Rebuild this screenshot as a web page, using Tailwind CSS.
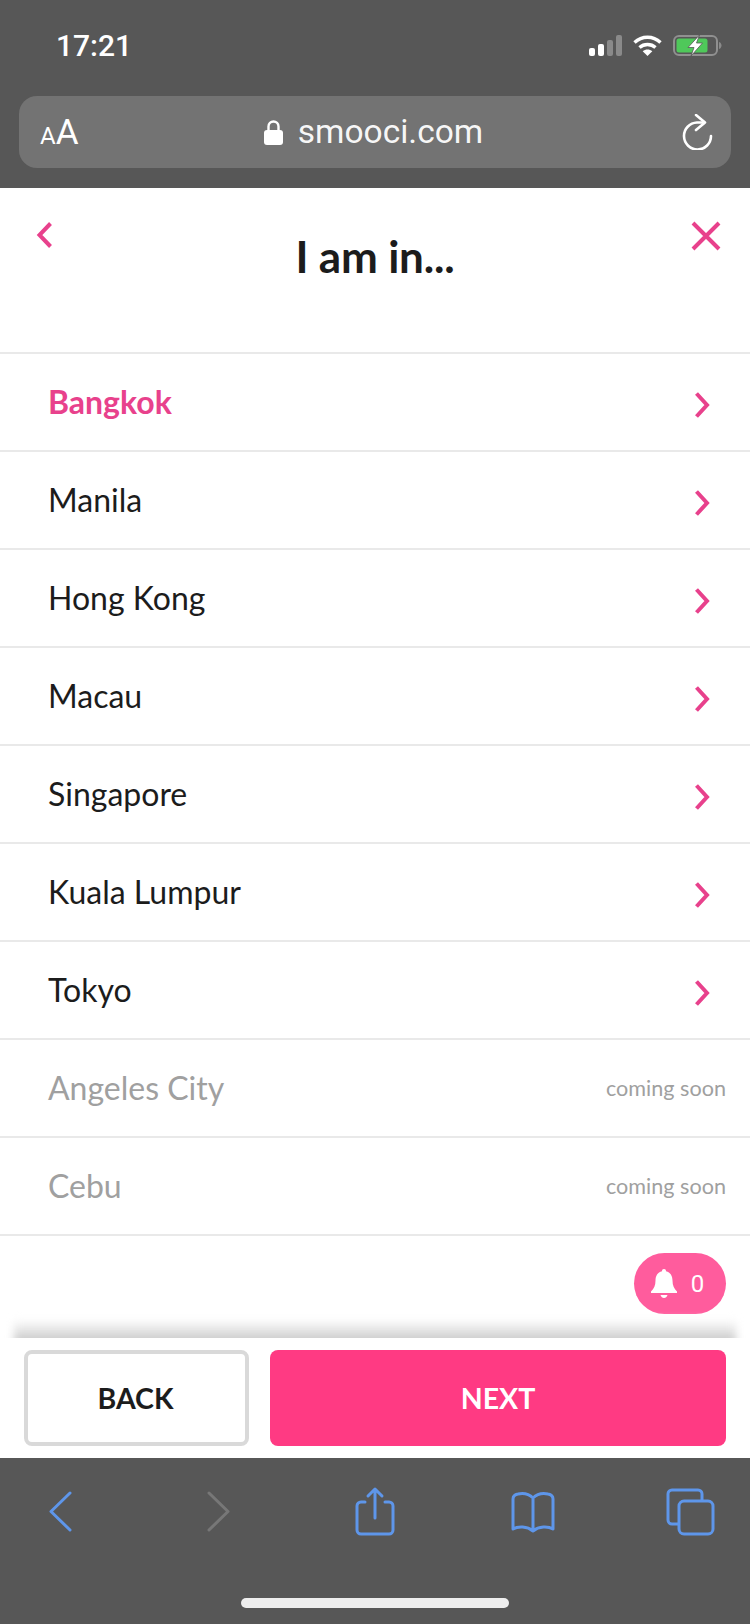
<!DOCTYPE html>
<html lang="en">
<head>
    <meta charset="UTF-8">
    <meta name="viewport" content="width=device-width, initial-scale=1.0">
    <title>smooci</title>
    <script src="https://cdn.jsdelivr.net/npm/@tailwindcss/browser@4"></script>
</head>
<body class="bg-white font-['Lato',sans-serif] text-[#1c1c1c]">
<div class="w-[750px] h-[1624px] flex flex-col overflow-hidden">

    <!-- safari top -->
    <div class="h-[188px] shrink-0 bg-[#575757] text-white px-[19px] pt-[26px]">
        <div class="h-[70px] flex items-start justify-between font-['Roboto',sans-serif]">
            <span class="ml-[37px] mt-[2px] text-[30px] leading-[36px] font-medium">17:21</span>
            <div class="flex items-start gap-[11px] mt-[9px] mr-[9px]">
                <svg width="33" height="21" viewBox="0 0 33 21">
                    <rect x="0" y="13" width="6" height="8" rx="2" fill="#fff"/>
                    <rect x="9" y="9" width="6" height="12" rx="2" fill="#fff"/>
                    <rect x="18" y="5" width="6" height="16" rx="2" fill="#8a8a8a"/>
                    <rect x="27" y="0" width="6" height="21" rx="2" fill="#8a8a8a"/>
                </svg>
                <svg width="29" height="21" viewBox="0 0 29 21" fill="none" stroke="#fff" stroke-width="3.4" stroke-linecap="butt">
                    <path d="M1.500 7.500C9 .5 20 .5 27.500 7.500"/>
                    <path d="M6.500 12.500C11 8.500 18 8.500 22.500 12.500"/>
                    <path d="M14.500 21l-4.800-4.800c2.800-2.400 6.800-2.400 9.600 0z" fill="#fff" stroke="none"/>
                </svg>
                <svg width="49" height="21" viewBox="0 0 49 21">
                    <rect x="1" y="1" width="43" height="19" rx="5" fill="none" stroke="#909090" stroke-width="2"/>
                    <rect x="3.500" y="3.500" width="31" height="14" rx="2.500" fill="#4fc85a"/>
                    <path d="M46 7c1.800.6 2.500 2 2.500 3.500S47.800 13.400 46 14z" fill="#8a8a8a"/>
                    <path d="M26.500 0L15 12.500h6L18 21 29.500 8H23.500z" fill="#fff" stroke="#575757" stroke-width=".8"/>
                </svg>
            </div>
        </div>
        <div class="h-[72px] rounded-[18px] bg-[#737373] flex items-center justify-between pl-[21px] pr-[18px] font-['Roboto',sans-serif]">
            <span class="w-[75px] flex items-baseline leading-none font-normal">
                <span class="text-[24px]">A</span><span class="text-[35px]">A</span>
            </span>
            <div class="flex items-center gap-[15px] ml-[-1px]">
                <svg width="19" height="25" viewBox="0 0 19 25" fill="none">
                    <path d="M4.500 11V6.500a5 5 0 0 1 10 0V11" stroke="#fff" stroke-width="2.400"/>
                    <rect x="0" y="10" width="19" height="15" rx="3" fill="#fff"/>
                </svg>
                <span class="text-[33.500px] leading-none font-normal text-white/95">smooci.com</span>
            </div>
            <svg width="80" height="36" viewBox="0 0 80 36" fill="none" stroke="#fff" stroke-width="2.600" stroke-linecap="round" stroke-linejoin="round">
                <path d="M70 8.500H64A13.500 13.500 0 1 0 78 22"/>
                <path d="M63 1l9 7.500L63 16"/>
            </svg>
        </div>
    </div>

    <!-- header -->
    <div class="h-[164px] shrink-0 grid grid-cols-[1fr_auto_1fr] items-start px-[30px]">
        <svg width="22" height="26" viewBox="0 0 22 26" fill="none" stroke="#e8418c" stroke-width="4" class="mt-[34px] ml-[4px]">
            <path d="M16.500 1.500L5.500 13 16.500 24.500"/>
        </svg>
        <h1 class="mt-[41px] text-[44px] leading-[54px] font-bold tracking-[-0.2px]">I am in...</h1>
        <svg width="30" height="30" viewBox="0 0 30 30" fill="none" stroke="#e8418c" stroke-width="4" class="mt-[33px] justify-self-end mr-[-1px]">
            <path d="M2 2l26 26M28 2L2 28"/>
        </svg>
    </div>

    <!-- city list -->
    <ul class="shrink-0 border-t-2 border-[#e9e9e9] text-[32px]">
        <li class="h-[98px] border-b-2 border-[#e9e9e9] flex items-center justify-between pl-[48px] pr-[39px] font-bold text-[#e8418c]">
            <span>Bangkok</span>
            <svg width="18" height="26" viewBox="0 0 18 26" fill="none" stroke="#e8418c" stroke-width="4" class="mt-[6px]"><path d="M3.500 1.500L14 13 3.500 24.500"/></svg>
        </li>
        <li class="h-[98px] border-b-2 border-[#e9e9e9] flex items-center justify-between pl-[48px] pr-[39px]">
            <span>Manila</span>
            <svg width="18" height="26" viewBox="0 0 18 26" fill="none" stroke="#e8418c" stroke-width="4" class="mt-[6px]"><path d="M3.500 1.500L14 13 3.500 24.500"/></svg>
        </li>
        <li class="h-[98px] border-b-2 border-[#e9e9e9] flex items-center justify-between pl-[48px] pr-[39px]">
            <span>Hong Kong</span>
            <svg width="18" height="26" viewBox="0 0 18 26" fill="none" stroke="#e8418c" stroke-width="4" class="mt-[6px]"><path d="M3.500 1.500L14 13 3.500 24.500"/></svg>
        </li>
        <li class="h-[98px] border-b-2 border-[#e9e9e9] flex items-center justify-between pl-[48px] pr-[39px]">
            <span>Macau</span>
            <svg width="18" height="26" viewBox="0 0 18 26" fill="none" stroke="#e8418c" stroke-width="4" class="mt-[6px]"><path d="M3.500 1.500L14 13 3.500 24.500"/></svg>
        </li>
        <li class="h-[98px] border-b-2 border-[#e9e9e9] flex items-center justify-between pl-[48px] pr-[39px]">
            <span>Singapore</span>
            <svg width="18" height="26" viewBox="0 0 18 26" fill="none" stroke="#e8418c" stroke-width="4" class="mt-[6px]"><path d="M3.500 1.500L14 13 3.500 24.500"/></svg>
        </li>
        <li class="h-[98px] border-b-2 border-[#e9e9e9] flex items-center justify-between pl-[48px] pr-[39px]">
            <span>Kuala Lumpur</span>
            <svg width="18" height="26" viewBox="0 0 18 26" fill="none" stroke="#e8418c" stroke-width="4" class="mt-[6px]"><path d="M3.500 1.500L14 13 3.500 24.500"/></svg>
        </li>
        <li class="h-[98px] border-b-2 border-[#e9e9e9] flex items-center justify-between pl-[48px] pr-[39px]">
            <span>Tokyo</span>
            <svg width="18" height="26" viewBox="0 0 18 26" fill="none" stroke="#e8418c" stroke-width="4" class="mt-[6px]"><path d="M3.500 1.500L14 13 3.500 24.500"/></svg>
        </li>
        <li class="h-[98px] border-b-2 border-[#e9e9e9] flex items-center justify-between pl-[48px] pr-[24px] text-[#a0a0a0]">
            <span>Angeles City</span>
            <span class="text-[21.600px]">coming soon</span>
        </li>
        <li class="h-[98px] border-b-2 border-[#e9e9e9] flex items-center justify-between pl-[48px] pr-[24px] text-[#a0a0a0]">
            <span>Cebu</span>
            <span class="text-[21.600px]">coming soon</span>
        </li>
    </ul>

    <!-- notification badge -->
    <div class="flex-1 flex flex-col justify-between pt-[17px]">
        <div class="self-end mr-[24px] w-[92px] h-[61px] pr-[5px] rounded-full bg-[#ff5c9d] text-white flex items-center justify-center gap-[14px]">
            <svg width="26" height="30" viewBox="0 0 26 30" fill="#fff">
                <path d="M13 0c1.300 0 2 .9 2 2.200C19.500 3.200 21.500 7 21.500 11.500c0 5 1.500 8 4.500 11V24H0v-1.500c3-3 4.500-6 4.500-11C4.500 7 6.500 3.200 11 2.200 11 .9 11.700 0 13 0z"/>
                <path d="M9.500 26h7c-.5 2-2 3-3.500 3s-3-1-3.500-3z"/>
            </svg>
            <span class="text-[24px] leading-none font-['Roboto',sans-serif]">0</span>
        </div>
        <div class="h-[26px] -mb-[8px] mx-[14px] bg-gradient-to-b from-white to-[#bdbdbd] blur-[4px]"></div>
    </div>

    <!-- buttons -->
    <div class="relative h-[120px] shrink-0 bg-white flex gap-[21px] px-[24px] pt-[12px]">
        <button type="button" class="w-[225px] h-[96px] pr-[2px] rounded-[8px] border-[4px] border-[#d9d9d9] bg-white text-[28.500px] font-bold">BACK</button>
        <button type="button" class="flex-1 h-[96px] rounded-[8px] bg-[#ff3a83] text-white text-[28.500px] font-bold">NEXT</button>
    </div>

    <!-- safari bottom -->
    <div class="relative h-[166px] shrink-0 bg-[#575757]">
        <div class="h-[140px] flex items-start">
            <svg width="750" height="90" viewBox="0 1458 750 90" fill="none" stroke-linecap="round" stroke-linejoin="round" stroke-width="3">
                <path d="M70 1493L51 1511.500 70 1530" stroke="#5e96ea"/>
                <path d="M209 1493L228 1511.500 209 1530" stroke="#777"/>
                <g stroke="#5e96ea">
                    <path d="M365 1502h-4a4 4 0 0 0-4 4v24a4 4 0 0 0 4 4h28a4 4 0 0 0 4-4v-24a4 4 0 0 0-4-4h-4"/>
                    <path d="M375 1518v-29M368 1496l7-7 7 7"/>
                    <path d="M533 1498c-4-4-10-5-15-4-3 .5-5 2-5 5v30c5-3 14-3 20 2 6-5 15-5 20-2v-30c0-3-2-4.500-5-5-5-1-11 0-15 4zM533 1498v33"/>
                    <path d="M678 1524h-6a4 4 0 0 1-4-4v-26a4 4 0 0 1 4-4h26a4 4 0 0 1 4 4v6"/>
                    <rect x="679" y="1501" width="34" height="33" rx="5"/>
                </g>
            </svg>
        </div>
        <div class="mx-auto w-[268px] h-[10px] rounded-full bg-[#eeeeee]"></div>
    </div>
</div>
</body>
</html>
